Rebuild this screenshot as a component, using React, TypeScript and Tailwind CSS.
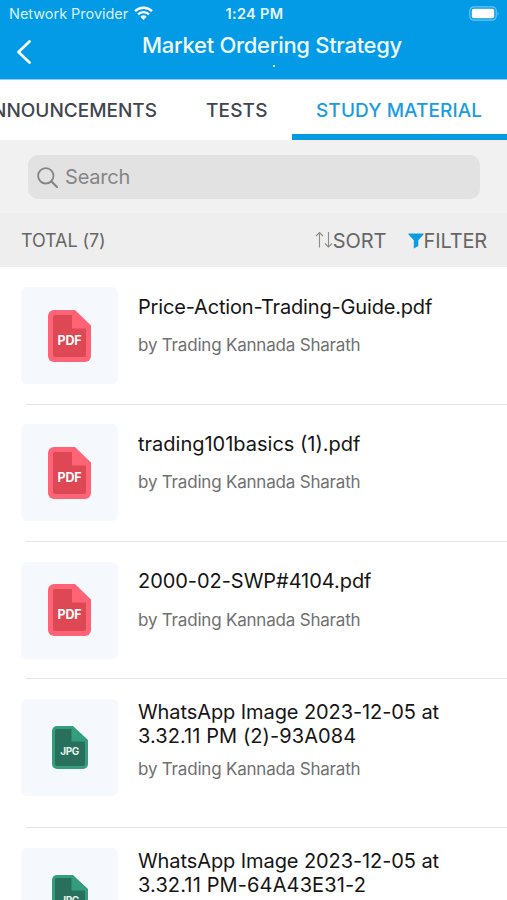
import React from 'react';

type FileKind = 'pdf' | 'jpg';

interface Material {
    lines: string[];
    kind: FileKind;
    tracking: string;
}

const materials: Material[] = [
    { lines: ['Price-Action-Trading-Guide.pdf'], kind: 'pdf', tracking: 'tracking-[-0.17px]' },
    { lines: ['trading101basics (1).pdf'], kind: 'pdf', tracking: 'tracking-normal' },
    { lines: ['2000-02-SWP#4104.pdf'], kind: 'pdf', tracking: 'tracking-[-0.05px]' },
    { lines: ['WhatsApp Image 2023-12-05 at', '3.32.11 PM (2)-93A084'], kind: 'jpg', tracking: 'first:tracking-[-0.09px] last:tracking-[0.08px]' },
    { lines: ['WhatsApp Image 2023-12-05 at', '3.32.11 PM-64A43E31-2'], kind: 'jpg', tracking: 'first:tracking-[-0.09px] last:tracking-[0.13px]' },
];

const PdfIcon: React.FC = () => (
    <svg width="43" height="52" viewBox="0 0 43 52" className="block">
        <path d="M6 0H27L43 15.5V46a6 6 0 0 1-6 6H6a6 6 0 0 1-6-6V6a6 6 0 0 1 6-6Z" fill="#ff6376" />
        <path d="M7 5H24V18.5H38V45a2 2 0 0 1-2 2H7a2 2 0 0 1-2-2V7a2 2 0 0 1 2-2Z" fill="#de4855" />
        <text x="21.6" y="34.8" textAnchor="middle" textLength="24" fontSize="12.5" fontWeight="700" fill="#fff" fontFamily="Inter, sans-serif">PDF</text>
    </svg>
);

const JpgIcon: React.FC = () => (
    <svg width="36" height="43" viewBox="0 0 36 43" className="block">
        <path d="M5 0H21L36 14V38a5 5 0 0 1-5 5H5a5 5 0 0 1-5-5V5a5 5 0 0 1 5-5Z" fill="#349d7c" />
        <path d="M5 3H19.5V15.5H33V38a2 2 0 0 1-2 2H5a2 2 0 0 1-2-2V5a2 2 0 0 1 2-2Z" fill="#28705b" />
        <text x="17.8" y="28.6" textAnchor="middle" textLength="19" fontSize="10" fontWeight="700" fill="#e8f5f0" fontFamily="Inter, sans-serif">JPG</text>
    </svg>
);

const StatusBar: React.FC = () => (
    <div className="grid h-7 grid-cols-[1fr_auto_1fr] items-center pl-[9px] pr-[7px] text-white">
        <div className="flex items-center gap-[6px]">
            <span className="text-[14.5px] tracking-[-0.03px] whitespace-nowrap text-[#d8f1ff]">Network Provider</span>
            <svg width="19" height="14" viewBox="0 0 19 14" className="-mt-[2px] shrink-0">
                <path d="M1 5.2a12.2 12.2 0 0 1 17 0" fill="none" stroke="#fff" strokeWidth="2.4" />
                <path d="M4 8.4a7.9 7.9 0 0 1 11 0" fill="none" stroke="#fff" strokeWidth="2.3" />
                <path d="M6.4 10.8a4.5 4.5 0 0 1 6.2 0L9.5 14Z" fill="#fff" />
            </svg>
        </div>
        <span className="text-[14.5px] font-semibold tracking-[0.35px] text-[#e5f6ff]">1:24 PM</span>
        <svg width="31" height="15" viewBox="0 0 31 15" className="-mt-[2px] justify-self-end">
            <rect x="0.8" y="0.8" width="26.4" height="13.4" rx="4" fill="none" stroke="#69c5f5" strokeWidth="1.2" />
            <rect x="2.8" y="2.8" width="22.4" height="9.4" rx="2" fill="#fff" />
            <path d="M28.6 5.2q1.8 2.3 0 4.6Z" fill="#69c5f5" />
        </svg>
    </div>
);

const Header: React.FC = () => (
    <header className="h-[79px] bg-[#039be5]">
        <StatusBar />
        <div className="grid h-[51px] grid-cols-[142px_1fr]">
            <svg width="16" height="26" viewBox="0 0 16 26" className="mt-[11px] ml-4">
                <path d="M13.5 2.5L2.5 13L13.5 23.5" fill="none" stroke="#fff" strokeWidth="2.7" strokeLinecap="round" strokeLinejoin="round" />
            </svg>
            <div>
                <h1 className="mt-[2px] text-[22px] leading-[30px] font-medium tracking-[-0.3px] whitespace-nowrap text-[#eefaff]">Market Ordering Strategy</h1>
                <div className="mt-[5px] ml-[131px] size-[2px] bg-[#c5eaff]"></div>
            </div>
        </div>
    </header>
);

const Tabs: React.FC = () => (
    <nav className="flex h-[61px] border-t border-[#8ad3f7] bg-white text-[19px] font-medium whitespace-nowrap text-[#3f464d]">
        <div className="flex w-[182px] shrink-0 justify-end pt-[17px] pr-[25px]">ANNOUNCEMENTS</div>
        <div className="w-[110px] shrink-0 pt-[17px] pl-[24px] tracking-[0.15px]">TESTS</div>
        <div className="h-[60px] w-[215px] shrink-0 border-b-[6px] border-[#039be5] pt-[17px] pl-[24px] tracking-[0.1px] text-[#179de2]">STUDY MATERIAL</div>
    </nav>
);

const SearchBar: React.FC = () => (
    <div className="h-[73px] bg-[#f1f1f1] pt-[15px] pr-[27px] pl-7">
        <div className="flex h-11 items-center gap-[7px] rounded-[10px] bg-[#e2e2e2] pl-[9px] text-xl text-[#858585]">
            <svg width="21" height="21" viewBox="0 0 21 21">
                <circle cx="8.8" cy="8.8" r="7.7" fill="none" stroke="#858585" strokeWidth="1.8" />
                <path d="M14.5 14.5L20 20" stroke="#858585" strokeWidth="2.2" strokeLinecap="round" />
            </svg>
            <span className="tracking-[-0.2px]">Search</span>
        </div>
    </div>
);

const Toolbar: React.FC = () => (
    <div className="flex h-[54px] items-center bg-[#eeeeee] pt-px pr-5 pl-[21px] text-[#666]">
        <span className="text-[18px] tracking-[-0.1px]">TOTAL (7)</span>
        <div className="ml-auto flex items-center pt-px text-[20px]">
            <svg width="18" height="18" viewBox="0 0 18 18" fill="none" stroke="#8c8c8c" strokeWidth="1.1" className="-mt-[2px]">
                <path d="M4.5 16.5V1.5M1 5L4.5 1.5L8 5" />
                <path d="M13.5 1V16M10 12.5L13.5 16L17 12.5" />
            </svg>
            <span>SORT</span>
            <svg width="16" height="16" viewBox="0 0 16 16" className="-mt-px ml-[21px]">
                <path d="M.8.5H15.2Q16 .5 15.5 1.5L10.3 7.2V13L5.8 15.5V7.2L.5 1.5Q0 .5.8.5Z" fill="#0d9be3" />
            </svg>
            <span className="tracking-[-0.15px]">FILTER</span>
        </div>
    </div>
);

const MaterialRow: React.FC<{ item: Material }> = ({ item }) => {
    const tall = item.lines.length > 1;

    return (
        <li className={tall ? 'h-[149px]' : 'h-[137.3px]'}>
            <div className="flex h-full pt-5 pl-[21px]">
                <div className="flex size-[97px] shrink-0 items-center justify-center rounded-md bg-[#f5f9fe]">
                    {item.kind === 'pdf' ? <PdfIcon /> : <JpgIcon />}
                </div>
                <div className={tall ? 'ml-5 pt-px' : 'ml-5 pt-[7.7px]'}>
                    <h2 className="text-[20px] leading-[24.5px] whitespace-nowrap text-[#151515]">
                        {item.lines.map((line) => (
                            <span key={line} className={`block ${item.tracking}`}>{line}</span>
                        ))}
                    </h2>
                    <p className={`text-[17px] leading-6 tracking-[-0.2px] text-[#707070] ${tall ? 'mt-2' : 'mt-[14px]'}`}>
                        by Trading Kannada Sharath
                    </p>
                </div>
            </div>
            <div className="-mt-[0.5px] ml-[26px] h-px bg-[#e4e4e4]"></div>
        </li>
    );
};

const App: React.FC = () => {
    return (
        <div className="h-[900px] w-[507px] overflow-hidden bg-white font-['Inter','Liberation_Sans',sans-serif]">
            <Header />
            <Tabs />
            <SearchBar />
            <Toolbar />
            <ul>
                {materials.map((item) => (
                    <MaterialRow key={item.lines.join(' ')} item={item} />
                ))}
            </ul>
        </div>
    );
};

export default App;
